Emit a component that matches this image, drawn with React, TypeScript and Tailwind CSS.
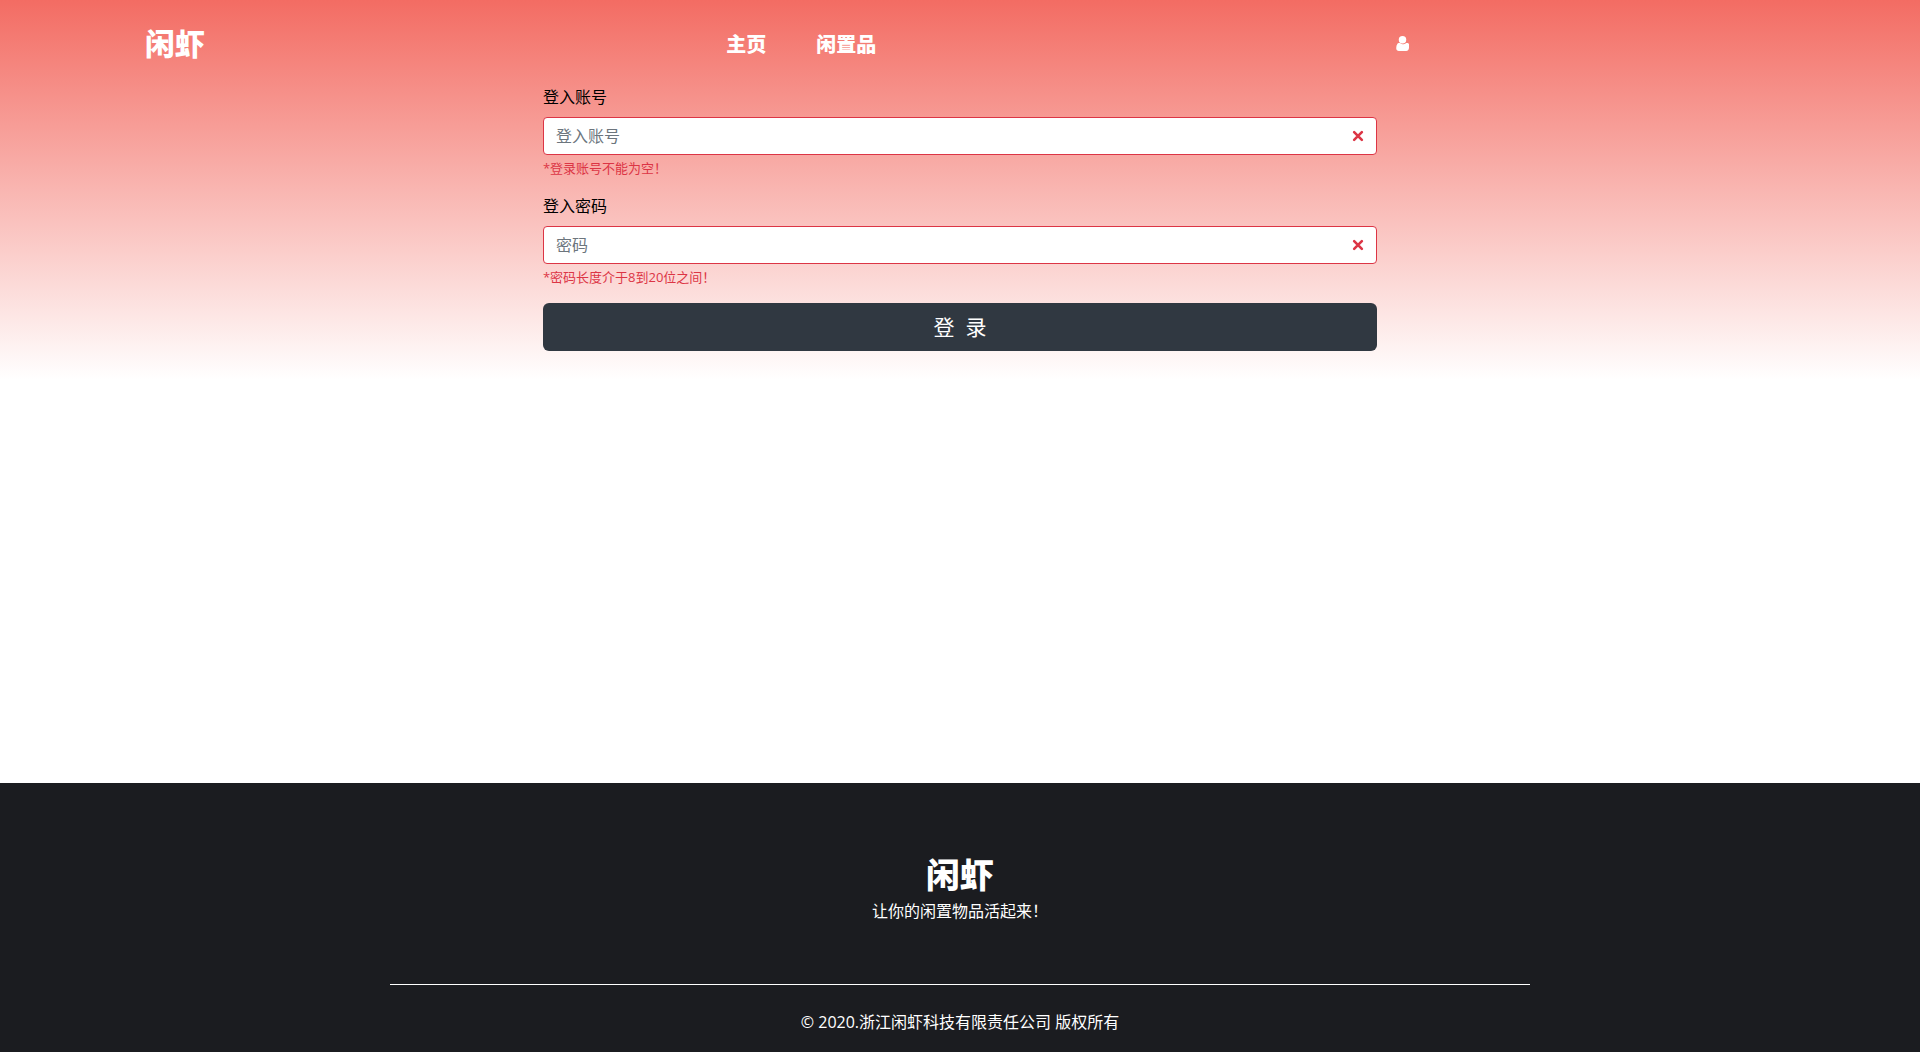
function CrossIcon() {
  return (
    <svg
      viewBox="-2 -2 7 7"
      aria-hidden="true"
      className="absolute top-[10px] right-[10px] size-[18px] fill-none stroke-[#dc3545]"
      strokeLinecap="round"
    >
      <path d="M0 0l3 3m0-3L0 3" />
    </svg>
  );
}

function UserIcon() {
  return (
    <svg viewBox="128 128 1280 1536" aria-hidden="true" className="h-[15px] w-[13px] fill-white">
      <path d="M1408 1405q0 120-73 189.5t-194 69.5h-746q-121 0-194-69.5t-73-189.5q0-53 3.5-103.5t14-109 26.5-108.5 43-97.5 62-81 85.5-53.5 111.5-20q9 0 42 21.5t74.5 48 108 48 133.5 21.5 133.5-21.5 108-48 74.5-48 42-21.5q61 0 111.5 20t85.5 53.5 62 81 43 97.5 26.5 108.5 14 109 3.5 103.5z" />
      <circle cx="768" cy="512" r="384" />
    </svg>
  );
}

type FieldProps = { id: string; type: string; label: string; placeholder: string; error: string };

function Field({ id, type, label, placeholder, error }: FieldProps) {
  return (
    <div className="mb-4">
      <label htmlFor={id} className="mb-2 block">{label}</label>
      <div className="relative">
        <input
          id={id}
          type={type}
          placeholder={placeholder}
          aria-invalid="true"
          aria-describedby={id + "-error"}
          className="block h-[38px] w-full rounded border border-[#dc3545] bg-white pr-10 pl-3 placeholder:text-[#6c757d]"
        />
        <CrossIcon />
      </div>
      <p id={id + "-error"} className="mt-1 text-[13px] leading-[19px] text-[#dc3545]">{error}</p>
    </div>
  );
}

export default function App() {
  return (
    <div className="flex min-h-screen flex-col bg-white font-['Open_Sans','Noto_Sans_CJK_SC',sans-serif] text-base leading-6 text-black">
      <div className="grow bg-[linear-gradient(#f36c63_0px,#ffffff_380px)]">
        <header className="grid h-[85px] grid-cols-[37.3%_1fr_27.3%] items-center pt-[2px] text-white">
          <a href="#" className="pl-[145px] text-[30px] font-extrabold">闲虾</a>
          <nav className="flex gap-[50px] pt-[2px] pl-[10px] text-xl font-extrabold">
            <a href="#">主页</a>
            <a href="#">闲置品</a>
          </nav>
          <a href="#" aria-label="用户"><UserIcon /></a>
        </header>
        <form className="mx-auto w-[43.45%]">
          <Field id="account" type="text" label="登入账号" placeholder="登入账号" error="*登录账号不能为空！" />
          <Field id="password" type="password" label="登入密码" placeholder="密码" error="*密码长度介于8到20位之间！" />
          <button type="button" className="h-12 w-full rounded-md bg-[#303841] text-[21px] whitespace-pre text-white">登  录</button>
        </form>
      </div>
      <footer className="bg-[#1b1c20] pt-[72px] pb-[18px] text-center text-white">
        <h2 className="text-[34px] leading-10 font-extrabold">闲虾</h2>
        <p className="mt-1">让你的闲置物品活起来！</p>
        <hr className="mx-auto mt-[61px] w-[59.4%] border-white" />
        <p className="mt-[25px]">© 2020.浙江闲虾科技有限责任公司 版权所有</p>
      </footer>
    </div>
  );
}
